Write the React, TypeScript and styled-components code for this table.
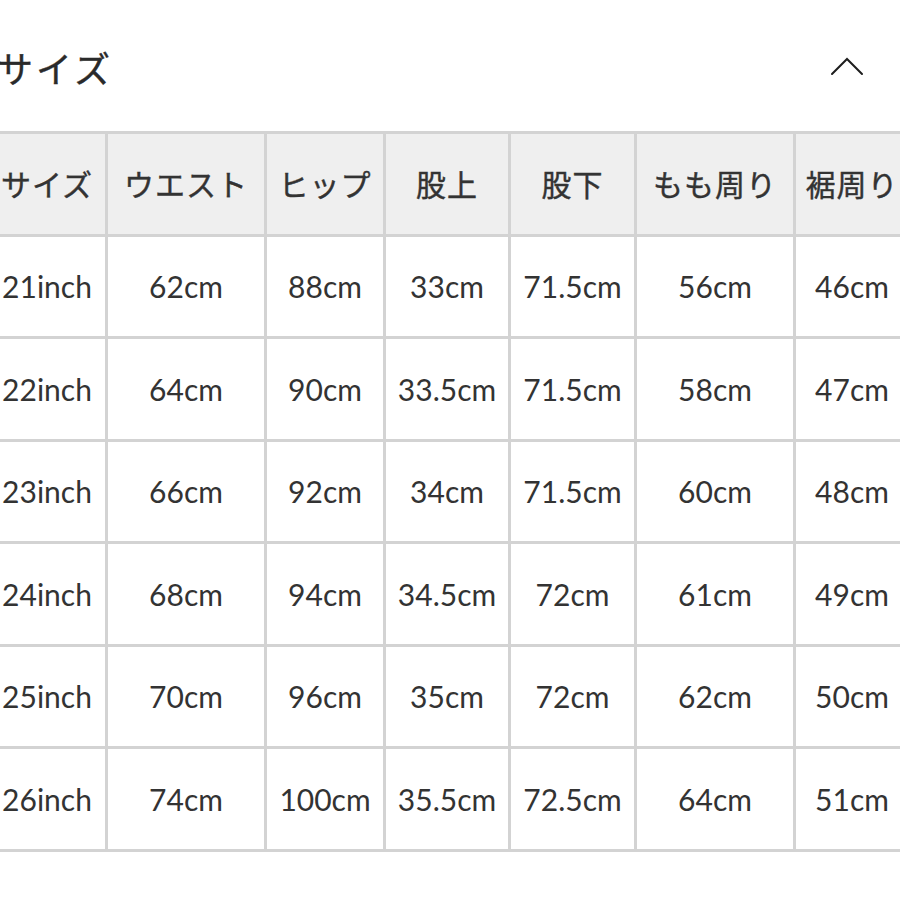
import styled, { createGlobalStyle } from "styled-components";

const GlobalStyle = createGlobalStyle`
  body {
    margin: 0;
    background: #fff;
    font-family: "Noto Sans CJK JP", "Noto Sans", sans-serif;
    color: #333;
  }
`;

const headers = ["サイズ", "ウエスト", "ヒップ", "股上", "股下", "もも周り", "裾周り"];

const rows = [
  ["21inch", "62cm", "88cm", "33cm", "71.5cm", "56cm", "46cm"],
  ["22inch", "64cm", "90cm", "33.5cm", "71.5cm", "58cm", "47cm"],
  ["23inch", "66cm", "92cm", "34cm", "71.5cm", "60cm", "48cm"],
  ["24inch", "68cm", "94cm", "34.5cm", "72cm", "61cm", "49cm"],
  ["25inch", "70cm", "96cm", "35cm", "72cm", "62cm", "50cm"],
  ["26inch", "74cm", "100cm", "35.5cm", "72.5cm", "64cm", "51cm"],
];

export default function App() {
  return (
    <>
      <GlobalStyle />
      <Page>
        <SectionHeader>
          <Title>サイズ</Title>
          <Chevron width="34" height="20" viewBox="0 0 34 20" aria-hidden>
            <polyline points="2,17 17,2 32,17" />
          </Chevron>
        </SectionHeader>
        <Table>
          {headers.map((h) => (
            <HeadCell key={h}>{h}</HeadCell>
          ))}
          {rows.flatMap((row, r) =>
            row.map((value, c) => <Cell key={`${r}-${c}`}>{value}</Cell>)
          )}
        </Table>
      </Page>
    </>
  );
}

const Page = styled.div`
  width: 900px;
  height: 900px;
  overflow: hidden;
`;

const SectionHeader = styled.div`
  height: 131px;
  display: flex;
  align-items: center;
  justify-content: space-between;
  padding: 2px 36px 0 0;
  box-sizing: border-box;
`;

const Title = styled.h2`
  margin: 0 0 0 -3px;
  font-size: 36px;
  font-weight: 400;
  color: #2a2a2a;
  letter-spacing: 3px;
  -webkit-text-stroke: 0.4px #2a2a2a;
`;

const Chevron = styled.svg`
  fill: none;
  stroke: #1e1e1e;
  stroke-width: 2;
  stroke-linecap: round;
  stroke-linejoin: miter;
`;

const Table = styled.div`
  display: grid;
  grid-template-columns: 116px 156px 116px 122px 123px 156px 112px;
  grid-auto-rows: 99.5px;
  gap: 3px;
  padding: 3px;
  width: max-content;
  margin-left: -14px;
  background: #d3d3d3;
`;

const Cell = styled.div`
  display: flex;
  align-items: center;
  justify-content: center;
  background: #fff;
  font-family: Lato, "Noto Sans CJK JP", sans-serif;
  font-size: 30px;
  color: #333;
  white-space: nowrap;
`;

const HeadCell = styled(Cell)`
  background: #efefef;
  font-family: "Noto Sans CJK JP", "Noto Sans", sans-serif;
  font-size: 30px;
  font-weight: 400;
  letter-spacing: 1px;
  color: #333;
  padding-bottom: 2px;
  -webkit-text-stroke: 0.4px #333;
`;
